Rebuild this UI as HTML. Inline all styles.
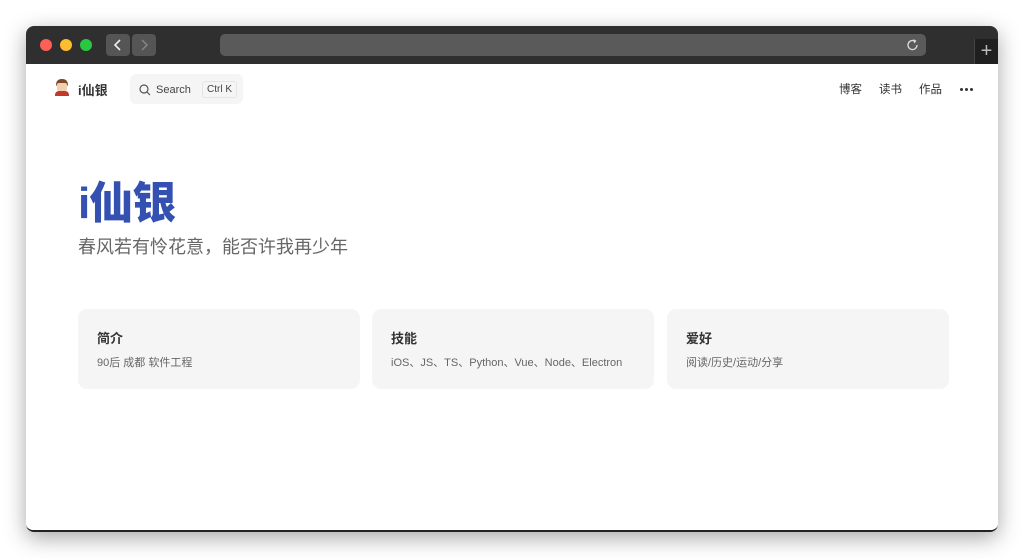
<!DOCTYPE html>
<html><head><meta charset="utf-8"><style>
*{margin:0;padding:0;box-sizing:border-box}
body{width:1024px;height:559px;background:#fff;position:relative;overflow:hidden;font-family:"Liberation Sans","Noto Sans CJK SC",sans-serif}
.win{position:absolute;left:26px;top:26px;width:972px;height:506px;border-radius:8px;background:#fff;box-shadow:0 6px 22px rgba(0,0,0,.35);overflow:hidden;border-bottom:2px solid #222}
.bar{position:absolute;left:0;top:0;width:972px;height:38px;background:#2f2f2f}
.dot{position:absolute;top:13px;width:12px;height:12px;border-radius:50%}
.nb{position:absolute;top:8px;width:24px;height:22px;border-radius:4px;background:#555}
.url{position:absolute;left:194px;top:8px;width:706px;height:22px;border-radius:5px;background:#5a5a5a}
.plus{position:absolute;left:948px;top:13px;width:24px;height:25px;background:#1f1f1f;border-left:1px solid #444;color:#bbb;font-size:20px;text-align:center;line-height:24px}
.c{position:absolute;left:0;top:38px;width:972px;height:466px;background:#fff}
.logo{position:absolute;left:52px;top:16px;font-size:13px;font-weight:bold;color:#333}
.search{position:absolute;left:104px;top:10px;width:113px;height:30px;background:#f5f5f5;border-radius:6px;font-size:11px;color:#444}
.kbd{position:absolute;left:72px;top:7px;height:17px;padding:0 4px;border:1px solid #e5e5e5;border-radius:3px;font-size:10px;line-height:15px;color:#444}
.nav{position:absolute;top:17px;font-size:11.5px;color:#333}
h1{position:absolute;left:52px;top:103px;font-size:44px;font-weight:900;color:#3451b2;letter-spacing:-1px}
.sub{position:absolute;left:52px;top:169px;font-size:18px;color:#666}
.card{position:absolute;top:245px;width:282px;height:80px;background:#f5f5f5;border-radius:9px;padding:19px 19px}
.card b{display:block;font-size:13px;color:#333;margin-bottom:6px}
.card span{font-size:11px;color:#666}
</style></head><body>
<div class="win">
<div class="bar">
<div class="dot" style="left:14px;background:#fe5f57"></div>
<div class="dot" style="left:34px;background:#febc2e"></div>
<div class="dot" style="left:54px;background:#28c840"></div>
<div class="nb" style="left:80px"><svg width="24" height="22"><path d="M14 6 L9 11 L14 16" fill="none" stroke="#eee" stroke-width="1.6"/></svg></div>
<div class="nb" style="left:106px"><svg width="24" height="22"><path d="M10 6 L15 11 L10 16" fill="none" stroke="#888" stroke-width="1.4"/></svg></div>
<div class="url"><svg style="position:absolute;right:6px;top:4px" width="14" height="14" viewBox="0 0 14 14"><path d="M11 7 A4.5 4.5 0 1 1 8.5 3" fill="none" stroke="#ddd" stroke-width="1.3"/><path d="M7.5 1 L10.5 3 L8 5.5" fill="#ddd"/></svg></div>
<div class="plus">+</div>
</div>
<div class="c">
<div style="position:absolute;left:28px;top:15px;width:16px;height:17px">
<div style="position:absolute;left:2px;top:0;width:12px;height:7px;background:#7a4a2a;border-radius:6px 6px 2px 2px"></div>
<div style="position:absolute;left:3px;top:4px;width:10px;height:8px;background:#f3cfb0;border-radius:2px"></div>
<div style="position:absolute;left:1px;top:12px;width:14px;height:5px;background:#c0392b;border-radius:4px 4px 0 0"></div>
</div>
<div class="logo">i仙银</div>
<div class="search">
<svg style="position:absolute;left:9px;top:10px" width="12" height="12" viewBox="0 0 12 12"><circle cx="5" cy="5" r="4" fill="none" stroke="#555" stroke-width="1.2"/><line x1="8" y1="8" x2="11" y2="11" stroke="#555" stroke-width="1.2"/></svg>
<span style="position:absolute;left:26px;top:10px">Search</span>
<span class="kbd">Ctrl K</span>
</div>
<div class="nav" style="left:813px">博客</div>
<div class="nav" style="left:853px">读书</div>
<div class="nav" style="left:893px">作品</div>
<div style="position:absolute;left:934px;top:24px;width:14px;height:3px">
<span style="position:absolute;left:0;width:3px;height:3px;border-radius:50%;background:#333"></span>
<span style="position:absolute;left:5px;width:3px;height:3px;border-radius:50%;background:#333"></span>
<span style="position:absolute;left:10px;width:3px;height:3px;border-radius:50%;background:#333"></span>
</div>
<h1>i仙银</h1>
<div class="sub">春风若有怜花意，能否许我再少年</div>
<div class="card" style="left:52px"><b>简介</b><span>90后 成都 软件工程</span></div>
<div class="card" style="left:346px"><b>技能</b><span>iOS、JS、TS、Python、Vue、Node、Electron</span></div>
<div class="card" style="left:641px"><b>爱好</b><span>阅读/历史/运动/分享</span></div>
</div>
</div>
</body></html>
